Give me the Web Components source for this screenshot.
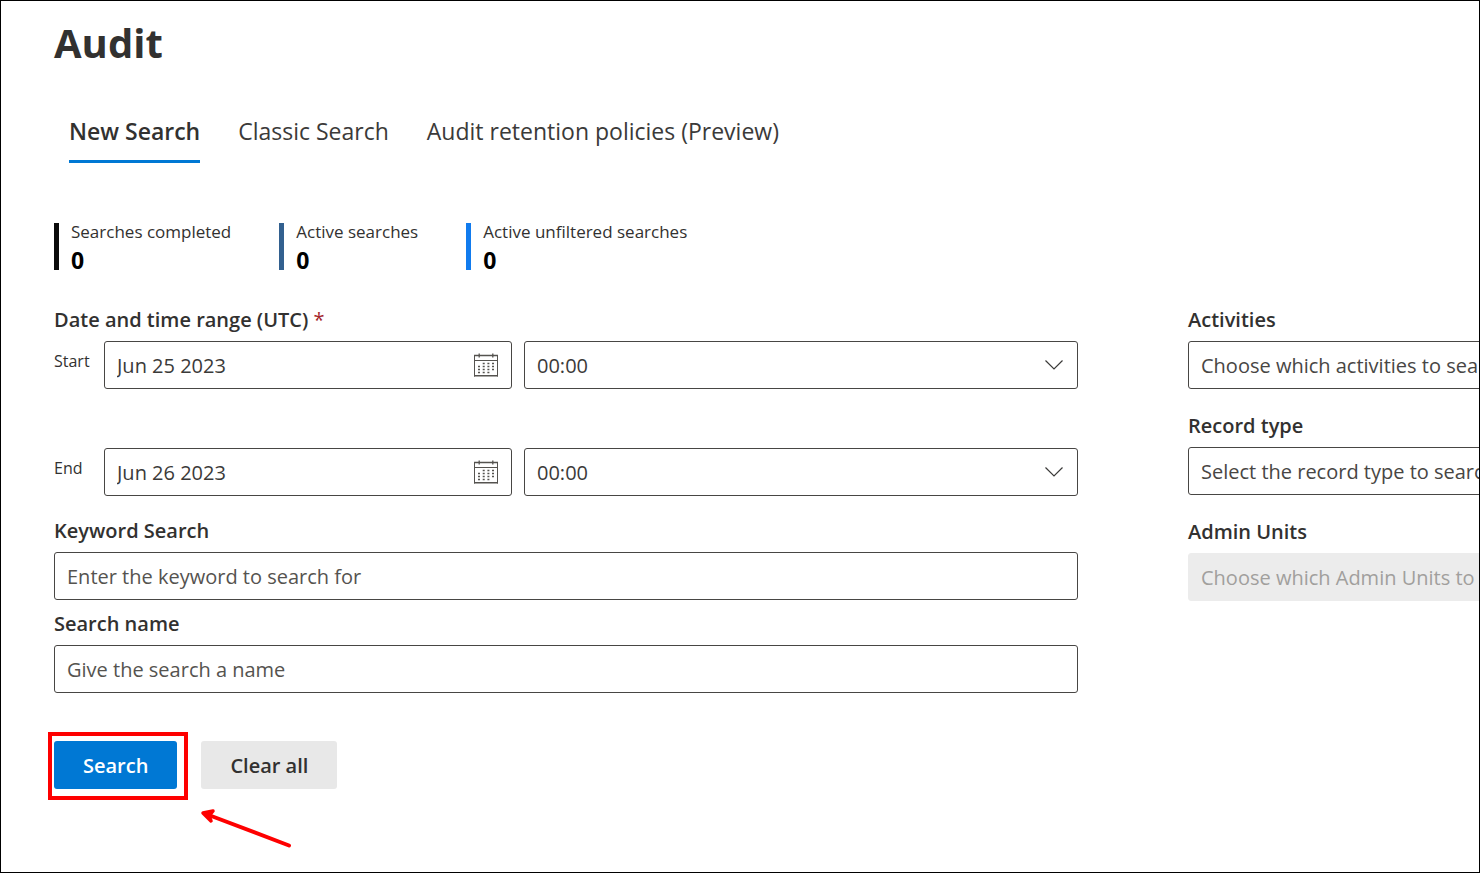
<!DOCTYPE html>
<html lang="en">
<head>
<meta charset="utf-8">
<title>Audit</title>
<style>
  body { margin: 0; background: #fff; color: #323130; font-family: "Open Sans", "Noto Sans", sans-serif; }
</style>
</head>
<body>
<audit-page></audit-page>
<script>
const define = (name, render) => customElements.define(name, class extends HTMLElement {
  connectedCallback() {
    if (this.shadowRoot) return;
    const t = document.createElement('template');
    t.innerHTML = render(this);
    this.attachShadow({ mode: 'open' }).append(t.content.cloneNode(true));
  }
});

const fieldCss = `
  *, *::before { box-sizing: border-box; }
  :host { display: block; }
  label { display: block; font-size: 20px; line-height: 28px; font-weight: 600; margin-bottom: 7px; }
  input, select { display: block; width: 100%; height: 48px; margin: 0; padding: 0 12px; border: 1px solid #484644;
    border-radius: 3px; background: #fff; color: #3b3a39; font: 400 20px "Open Sans", "Noto Sans", sans-serif; appearance: none; outline: none; }
  input::placeholder { color: #55534f; opacity: 1; }
`;

define('audit-tabs', () => `
  <style>
    :host { display: block; }
    nav { display: flex; gap: 38px; padding-left: 15px; }
    a { color: #3b3a39; text-decoration: none; font-size: 23px; line-height: 30px; padding-bottom: 14px; border-bottom: 3px solid transparent; white-space: nowrap; }
    a[aria-current] { font-weight: 600; color: #323130; border-color: #0078d4; }
  </style>
  <nav aria-label="Audit sections">
    <a href="#new" aria-current="page">New Search</a>
    <a href="#classic">Classic Search</a>
    <a href="#retention">Audit retention policies (Preview)</a>
  </nav>`);

define('audit-stat', el => `
  <style>
    :host { display: flex; gap: 12px; white-space: nowrap; }
    .bar { width: 5px; height: 47px; background: ${el.getAttribute('color')}; }
    .name { font-size: 17px; line-height: 18px; }
    .count { margin-top: 4px; font-size: 23px; line-height: 30px; font-weight: 700; color: #000; }
  </style>
  <div class="bar"></div>
  <div>
    <div class="name"><slot></slot></div>
    <div class="count">${el.getAttribute('count')}</div>
  </div>`);

define('text-field', el => `
  <style>${fieldCss}</style>
  <label for="f">${el.getAttribute('label')}</label>
  <input id="f" type="text" placeholder="${el.getAttribute('placeholder')}">`);

define('choice-field', el => `
  <style>${fieldCss}
    .clip { overflow: hidden; }
    select { width: calc(100% + 200px); color: #484644; }
    select:disabled { background: #ececec; border-color: #ececec; color: #a19f9d; opacity: 1; }
  </style>
  <label for="f">${el.getAttribute('label')}</label>
  <div class="clip"><select id="f" ${el.hasAttribute('disabled') ? 'disabled' : ''}><option>${el.getAttribute('placeholder')}</option></select></div>`);

define('date-time-row', el => `
  <style>${fieldCss}
    :host { display: grid; grid-template-columns: 38px minmax(0, 408fr) minmax(0, 554fr); gap: 12px; }
    label { font-size: 16px; font-weight: 400; line-height: 24px; padding-top: 8px; margin: 0; }
    .box { position: relative; }
    svg { position: absolute; top: 12px; right: 12px; pointer-events: none; }
  </style>
  <label for="d">${el.getAttribute('label')}</label>
  <div class="box">
    <input id="d" type="text" value="${el.getAttribute('date')}">
    <svg width="27" height="24" viewBox="0 0 27 24" fill="none" stroke="#55534f">
      <path d="M1.5 2v21.500M24.500 2v21.500M1 7.500h24" />
      <path d="M1 2.500h24M1 22.800h24" stroke-width="1.400"/>
      <path d="M6.200 .5v4M19.800 .5v4" stroke-width="1.300"/>
      <path d="M9.700 10.500h2M14.400 10.500h2M19 10.500h2M5 13.500h2M9.700 13.500h2M14.400 13.500h2M19 13.500h2M5 16.500h2M9.700 16.500h2M14.400 16.500h2M19 16.500h2M5 19.500h2M9.700 19.500h2M14.400 19.500h2" stroke-width="1.300"/>
    </svg>
  </div>
  <div class="box">
    <select aria-label="${el.getAttribute('label')} time"><option>${el.getAttribute('time')}</option></select>
    <svg width="24" height="24" viewBox="0 0 24 24" fill="none" stroke="#3b3a39" stroke-width="1.200"><path d="M3.500 7.500l8.500 8.500L20.500 7.500"/></svg>
  </div>`);

define('action-button', el => `
  <style>
    :host { display: block; }
    button { height: 48px; padding: 0 29px; border: 0; border-radius: 3px; background: #e8e8e8; color: #323130; font: 600 20px "Open Sans", "Noto Sans", sans-serif; }
    button.primary { background: #0078d4; color: #fff; }
  </style>
  <button type="button" class="${el.hasAttribute('primary') ? 'primary' : ''}"><slot></slot></button>`);

define('click-callout', () => `
  <style>
    :host { display: block; position: relative; }
    .frame { position: absolute; inset: -9px -11px -11px -6px; border: 4px solid #fe0000; pointer-events: none; }
    svg { position: absolute; left: 144px; top: 64px; pointer-events: none; }
  </style>
  <slot></slot>
  <div class="frame"></div>
  <svg width="96" height="46" viewBox="0 0 96 46" fill="none" stroke="#fe0000" stroke-linecap="round" stroke-linejoin="round">
    <path d="M8 9L91 40.500" stroke-width="4"/>
    <path d="M5 8L15 6L11 11L13 16Z" fill="#fe0000" stroke-width="3.500"/>
  </svg>`);

define('audit-page', () => `
  <style>
    :host { display: block; box-sizing: border-box; min-height: 100vh; border: 1px solid #000; padding: 14px 0 24px 53px; overflow: hidden; }
    h1 { margin: 0 0 45px; font-size: 40px; line-height: 56px; font-weight: 700; }
    .stats { display: flex; gap: 48px; margin: 60px 0 31px; }
    .form { display: grid; grid-template-columns: minmax(0, 1fr) 291px; column-gap: 110px; }
    fieldset { border: 0; margin: 0 0 21px; padding: 0; min-width: 0; }
    legend { padding: 0; margin-bottom: 7px; font-size: 20px; line-height: 28px; font-weight: 600; }
    .req { color: #a4262c; font-weight: 400; }
    .dates { display: grid; gap: 59px; }
    .texts { display: grid; gap: 10px; }
    .side { display: grid; gap: 23px; align-content: start; }
    .actions { display: flex; gap: 24px; margin-top: 48px; }
  </style>
  <h1>Audit</h1>
  <audit-tabs></audit-tabs>
  <div class="stats">
    <audit-stat color="#0b0b0b" count="0">Searches completed</audit-stat>
    <audit-stat color="#32608f" count="0">Active searches</audit-stat>
    <audit-stat color="#117bee" count="0">Active unfiltered searches</audit-stat>
  </div>
  <div class="form">
    <div>
      <fieldset>
        <legend>Date and time range (UTC) <span class="req">*</span></legend>
        <div class="dates">
          <date-time-row label="Start" date="Jun 25 2023" time="00:00"></date-time-row>
          <date-time-row label="End" date="Jun 26 2023" time="00:00"></date-time-row>
        </div>
      </fieldset>
      <div class="texts">
        <text-field label="Keyword Search" placeholder="Enter the keyword to search for"></text-field>
        <text-field label="Search name" placeholder="Give the search a name"></text-field>
      </div>
    </div>
    <div class="side">
      <choice-field label="Activities" placeholder="Choose which activities to search for"></choice-field>
      <choice-field label="Record type" placeholder="Select the record type to search for"></choice-field>
      <choice-field label="Admin Units" placeholder="Choose which Admin Units to search for" disabled></choice-field>
    </div>
  </div>
  <div class="actions">
    <click-callout><action-button primary>Search</action-button></click-callout>
    <action-button>Clear all</action-button>
  </div>`);
</script>
</body>
</html>
